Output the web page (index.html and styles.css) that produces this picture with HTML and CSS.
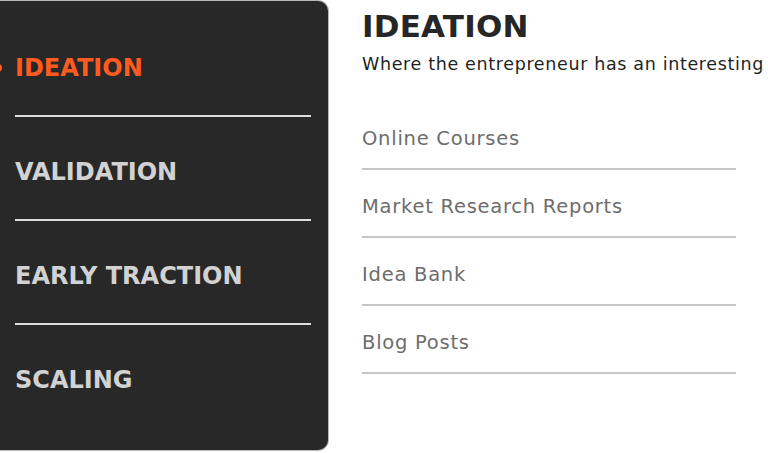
FILE: index.html
```html
<!DOCTYPE html>
<html lang="en">
<head>
<meta charset="utf-8">
<title>Stages</title>
<link rel="stylesheet" href="styles.css">
</head>
<body>
<div class="page">
  <nav class="stages">
    <div class="stage stage-active"><span class="stage-label">IDEATION</span></div>
    <div class="stage"><span class="stage-label">VALIDATION</span></div>
    <div class="stage"><span class="stage-label">EARLY TRACTION</span></div>
    <div class="stage stage-last"><span class="stage-label">SCALING</span></div>
  </nav>
  <main class="detail">
    <h1 class="detail-title">IDEATION</h1>
    <p class="detail-sub">Where the entrepreneur has an interesting</p>
    <ul class="links">
      <li class="link">Online Courses</li>
      <li class="link">Market Research Reports</li>
      <li class="link">Idea Bank</li>
      <li class="link">Blog Posts</li>
    </ul>
  </main>
</div>
</body>
</html>
```
FILE: styles.css
```css
html, body {
  margin: 0;
  padding: 0;
  background: #ffffff;
  overflow: hidden;
}
body {
  font-family: "DejaVu Sans", "Liberation Sans", sans-serif;
  width: 768px;
  height: 453px;
}
.page {
  display: flex;
  align-items: flex-start;
}
.stages {
  box-sizing: border-box;
  margin-top: 1px;
  margin-left: -20px;
  width: 348px;
  height: 449px;
  padding: 12px 17px 21px 35px;
  background: #282828;
  border-radius: 10px;
  box-shadow: 0 0 0 1px rgba(0, 0, 0, 0.28);
  display: flex;
  flex-direction: column;
}
.stage {
  position: relative;
  padding: 39px 0 31px 0;
  font-size: 24px;
  line-height: 32px;
  height: 32px;
  border-bottom: 2px solid #dcdcdc;
}
.stage-last {
  border-bottom: 0;
}
.stage-label {
  font-weight: bold;
  color: #d2d2d2;
}
.stage-active .stage-label {
  color: #ff5a1f;
}
.stage-active::before {
  content: "";
  position: absolute;
  left: -21px;
  top: 51px;
  width: 8px;
  height: 8px;
  border-radius: 50%;
  background: #ff5a1f;
}
.detail {
  margin-left: 34px;
  width: 374px;
  display: flex;
  flex-direction: column;
}
.detail-title {
  margin: 8px 0 0;
  font-size: 31px;
  line-height: 36px;
  font-weight: bold;
  color: #262626;
  letter-spacing: 0.2px;
}
.detail-sub {
  margin: 8px 0 0;
  font-size: 17.5px;
  line-height: 24px;
  color: #1f1f1f;
  white-space: nowrap;
  letter-spacing: 0.65px;
}
.links {
  list-style: none;
  margin: 26px 0 0;
  padding: 0;
}
.link {
  padding: 25px 0 17px;
  line-height: 24px;
  font-size: 19.5px;
  color: #6d6d6d;
  border-bottom: 2px solid #c6c6c6;
  letter-spacing: 0.75px;
}
```
